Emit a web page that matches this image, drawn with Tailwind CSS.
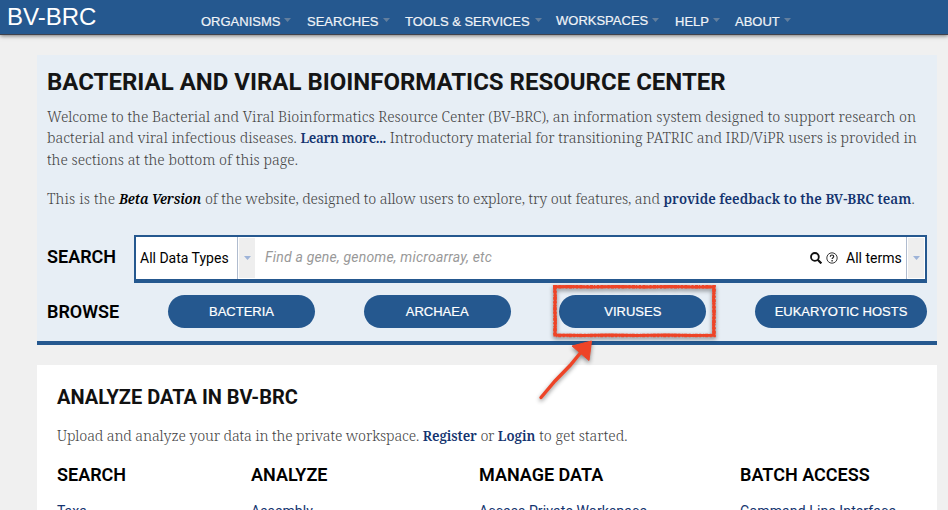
<!DOCTYPE html>
<html lang="en">
<head>
<meta charset="utf-8">
<title>BV-BRC</title>
<script src="https://cdn.jsdelivr.net/npm/@tailwindcss/browser@4"></script>
</head>
<body class="h-[510px] overflow-hidden bg-[#f0f0f0] font-['Roboto',sans-serif] text-black">
<header class="relative flex h-[35px] border-b border-[#40424c] bg-[#25588f] font-['Liberation_Sans',sans-serif] text-white shadow-[0_1px_4px_rgba(0,0,0,0.5)]">
  <div class="w-[201px] pl-[7px] text-2xl leading-[33px]">BV-BRC</div>
  <nav class="flex pt-3 text-[13px] leading-5 whitespace-nowrap text-[#f0f3f7] [-webkit-text-stroke:0.2px_#f0f3f7]">
    <div class="flex w-[106px] gap-1"><span>ORGANISMS</span><svg class="mt-[6px] h-1 w-[7px] fill-[#637f9e]" viewBox="0 0 7 4"><path d="M0 0h7L3.500 4z"/></svg></div>
    <div class="flex w-[98px] gap-1"><span>SEARCHES</span><svg class="mt-[6px] h-1 w-[7px] fill-[#637f9e]" viewBox="0 0 7 4"><path d="M0 0h7L3.500 4z"/></svg></div>
    <div class="flex w-[151px] gap-[5px]"><span class="tracking-[-0.04px]">TOOLS &amp; SERVICES</span><svg class="mt-[6px] h-1 w-[7px] fill-[#637f9e]" viewBox="0 0 7 4"><path d="M0 0h7L3.500 4z"/></svg></div>
    <div class="flex w-[119px] gap-1"><span class="-mt-px">WORKSPACES</span><svg class="mt-[6px] h-1 w-[7px] fill-[#637f9e]" viewBox="0 0 7 4"><path d="M0 0h7L3.500 4z"/></svg></div>
    <div class="flex w-[60px] gap-1"><span>HELP</span><svg class="mt-[6px] h-1 w-[7px] fill-[#637f9e]" viewBox="0 0 7 4"><path d="M0 0h7L3.500 4z"/></svg></div>
    <div class="flex gap-1"><span>ABOUT</span><svg class="mt-[6px] h-1 w-[7px] fill-[#637f9e]" viewBox="0 0 7 4"><path d="M0 0h7L3.500 4z"/></svg></div>
  </nav>
</header>
<main class="mx-[37px] mt-5 w-[900px]">
  <section class="relative z-10 h-[290px] border-b-4 border-[#25588f] bg-[#e7eef5] px-[10px] pt-3">
    <h1 class="text-2xl leading-[30px] font-bold whitespace-nowrap text-[#151515]">BACTERIAL AND VIRAL BIOINFORMATICS RESOURCE CENTER</h1>
    <div class="mt-[9px] font-['Noto_Serif','DejaVu_Serif',serif] text-[14.350px] leading-[21px] font-light whitespace-nowrap text-[#444]">
      <p class="tracking-[-0.027px]">Welcome to the Bacterial and Viral Bioinformatics Resource Center (BV-BRC), an information system designed to support research on</p>
      <p>bacterial and viral infectious diseases. <a class="text-[13.500px] font-semibold tracking-[-0.350px] text-[#14346f]">Learn more...</a> <span class="tracking-[-0.058px]">Introductory material for transitioning PATRIC and IRD/ViPR users is provided in</span></p>
      <p>the sections at the bottom of this page.</p>
      <p class="mt-[18px]"><span class="tracking-[0.150px]">This is the</span> <b class="text-[13.500px] font-semibold tracking-[-0.150px] text-black italic">Beta Version</b> <span class="tracking-[-0.110px]">of the website, designed to allow users to explore, try out features, and</span> <a class="text-[13.500px] font-semibold text-[#14346f]">provide feedback to the BV-BRC team</a>.</p>
    </div>
    <div class="mt-[25px] flex h-12">
      <h2 class="w-[87px] pt-[10px] text-[18px] leading-6 font-semibold">SEARCH</h2>
      <div class="flex h-12 w-[793px] border-2 border-b-4 border-[#25588f] bg-white text-[14px] leading-[42px] whitespace-nowrap">
        <div class="w-[102px] border-r border-[#b0bccf] pl-1">All Data Types</div>
        <div class="m-px flex h-10 w-4 items-center justify-center bg-[#eee]"><svg class="h-1 w-[7px] fill-[#9db3d8]" viewBox="0 0 7 4"><path d="M0 0h7L3.500 4z"/></svg></div>
        <div class="flex-1 pl-[9px] leading-10 tracking-[0.200px] text-[#999] italic">Find a gene, genome, microarray, etc</div>
        <svg class="mt-[15px] mr-1 size-3" viewBox="0 0 12 12" fill="none" stroke="#111" stroke-width="1.800"><circle cx="4.900" cy="4.900" r="3.900"/><path d="M7.700 7.700l3.700 3.700" stroke-width="2.200"/></svg>
        <svg class="mt-[15px] mr-2 size-3" viewBox="0 0 12 12" fill="none" stroke="#222"><circle cx="6" cy="6" r="5.200" stroke-width=".9"/><path d="M4.300 4.700C4.300 3.600 5 3 6 3s1.700.6 1.700 1.500C7.700 5.700 6.100 5.700 6.100 7.100" stroke-width="1.200"/><path d="M6.100 8.100v1.300" stroke-width="1.300"/></svg>
        <div class="w-[61px] border-r border-[#b0bccf]">All terms</div>
        <div class="m-px flex h-10 w-4 items-center justify-center bg-[#eee]"><svg class="h-1 w-[7px] fill-[#9db3d8]" viewBox="0 0 7 4"><path d="M0 0h7L3.500 4z"/></svg></div>
      </div>
    </div>
    <div class="mt-3 flex">
      <h2 class="w-[121px] pt-[5px] text-[18px] leading-6 font-semibold">BROWSE</h2>
      <div class="flex flex-1 justify-between font-['Liberation_Sans',sans-serif] text-[13px] leading-[33px] whitespace-nowrap text-white [-webkit-text-stroke:0.2px_white]">
        <div class="h-[33px] w-[147px] rounded-full bg-[#25588f] text-center">BACTERIA</div>
        <div class="h-[33px] w-[147px] rounded-full bg-[#25588f] text-center">ARCHAEA</div>
        <div class="h-[33px] w-[147px] rounded-full bg-[#25588f] text-center">VIRUSES</div>
        <div class="h-[33px] w-[172px] rounded-full bg-[#25588f] text-center">EUKARYOTIC HOSTS</div>
      </div>
    </div>
    <svg class="absolute top-[223px] left-[483px] h-[130px] w-[210px] drop-shadow-[0_2px_2px_rgba(0,0,0,0.45)]" viewBox="520 278 210 130" fill="none" stroke="#ee4427">
      <path d="M554.500 286.800l15-.4 22 .6 25-.4 28 .5 26-.5 24 .4 19.500-.3-.4 12 .5 14-.5 12 .3 10.500-22 .4-25-.6-30 .5-28-.4-26 .5-28-.5.5-14-.6-12 .5-13z" stroke-width="3"/>
      <path d="M555 286.800h159v48.700H555z" stroke-width="3.600" stroke-dasharray="2 1.500 3 1 1 2"/>
      <path d="M541 397.500l14-16.500 15-15.500 14-17" stroke-width="3.400" stroke-linecap="round"/>
      <path d="M591.500 341l-19.500 5 17 14.500z" fill="#ee4427" stroke-linejoin="round"/>
    </svg>
  </section>
  <section class="mt-5 h-[145px] overflow-hidden bg-white px-5 pt-5">
    <h2 class="text-xl leading-6 font-bold text-[#111]">ANALYZE DATA IN BV-BRC</h2>
    <p class="mt-4 font-['Noto_Serif','DejaVu_Serif',serif] text-[14.350px] leading-[21px] font-light whitespace-nowrap text-[#444]"><span class="tracking-[-0.130px]">Upload and analyze your data in the private workspace.</span> <a class="text-[13.500px] font-semibold tracking-[-0.100px] text-[#14346f]">Register</a> <span class="tracking-[-0.400px]">or</span> <a class="text-[13.500px] font-semibold text-[#14346f]">Login</a> to get started.</p>
    <div class="mt-4 grid grid-cols-[194px_228px_261px_1fr] text-[14px] leading-5 whitespace-nowrap text-[#14346f]">
      <div><h3 class="mb-[14px] text-[18px] leading-6 font-semibold text-black">SEARCH</h3>Taxa</div>
      <div><h3 class="mb-[14px] text-[18px] leading-6 font-semibold text-black">ANALYZE</h3><span class="tracking-[0.100px]">Assembly</span></div>
      <div><h3 class="mb-[14px] text-[18px] leading-6 font-semibold text-black">MANAGE DATA</h3><span class="tracking-[0.110px]">Access Private Workspace</span></div>
      <div><h3 class="mb-[14px] text-[18px] leading-6 font-semibold text-black">BATCH ACCESS</h3><span class="tracking-[0.110px]">Command Line Interface</span></div>
    </div>
  </section>
</main>
</body>
</html>
